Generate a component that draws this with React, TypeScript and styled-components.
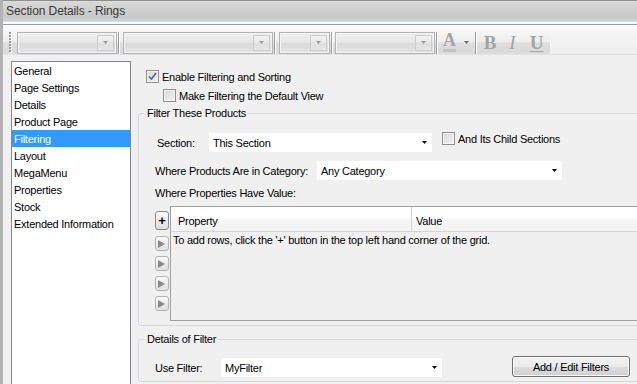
import React from "react";
import styled, { createGlobalStyle } from "styled-components";

const Global = createGlobalStyle`
  html, body { margin: 0; padding: 0; background: #f0f0f0; }
  body { font-family: "Liberation Sans", Arial, sans-serif; }
`;

const Window = styled.div`
  width: 637px;
  height: 384px;
  overflow: hidden;
  box-sizing: border-box;
  border-left: 3px solid #b2b2b2;
  background: #f0f0f0;
  display: flex;
  flex-direction: column;
  font-family: "Liberation Sans", Arial, sans-serif;
  font-size: 11px;
  letter-spacing: -0.25px;
  color: #000;
`;

const TitleBar = styled.div`
  height: 20px;
  flex-shrink: 0;
  border-top: 1px solid #8e8e8e;
  background: linear-gradient(#dadada, #cdcdcd 55%, #c9c9c9 80%, #d3d3d3);
  padding-left: 3px;
  font-size: 12px;
  letter-spacing: -0.1px;
  line-height: 21px;
  color: #3a3a3a;
`;

const TitleRule = styled.div`
  height: 2px;
  flex-shrink: 0;
  border-top: 1px solid #cde2f1;
  border-bottom: 1px solid #9c9c9c;
  background: #fbfbfb;
`;

const Toolbar = styled.div`
  height: 30px;
  flex-shrink: 0;
  box-sizing: border-box;
  padding-top: 5px;
  background: linear-gradient(#fafafa, #f3f3f3 50%, #eeeeee);
  border-bottom: 1px solid #e2e2e2;
`;

const Strip = styled.div`
  width: 547px;
  height: 25px;
  display: flex;
  align-items: center;
  padding-left: 6px;
  box-sizing: border-box;
  background: linear-gradient(#f7f7f7, #eeeeee 46%, #dedede 52%, #dadada 90%, #e4e4e4);
  border-radius: 0 3px 3px 0;
`;

const Grip = styled.svg`
  flex-shrink: 0;
`;

const ToolCombo = styled.div<{ $w: number; $ml: number }>`
  width: ${(p) => p.$w}px;
  margin-left: ${(p) => p.$ml}px;
  height: 22px;
  flex-shrink: 0;
  box-sizing: border-box;
  border: 1px solid #b4b4b4;
  box-shadow: inset 0 0 0 1px #f3f3f3;
  background: linear-gradient(#efefef, #e7e7e7 45%, #dadada 55%, #e5e5e5);
  display: flex;
  justify-content: flex-end;
  padding: 2px;
`;

const ToolArrow = styled.div`
  width: 17px;
  height: 100%;
  box-sizing: border-box;
  border: 1px solid #cdcdcd;
  background: linear-gradient(#f1f1f1, #e9e9e9 45%, #dedede 55%, #e8e8e8);
  display: flex;
  align-items: center;
  justify-content: center;
`;

const ToolSep = styled.div<{ $ml: number }>`
  width: 1px;
  height: 22px;
  margin-left: ${(p) => p.$ml}px;
  flex-shrink: 0;
  background: #9d9d9d;
  border-right: 1px solid #ffffff;
`;

const ToolGlyph = styled.span<{ $ml: number; $w: number; $italic?: boolean; $under?: boolean }>`
  margin-left: ${(p) => p.$ml}px;
  width: ${(p) => p.$w}px;
  flex-shrink: 0;
  display: inline-flex;
  justify-content: center;
  font-family: "Liberation Serif", "Times New Roman", serif;
  font-size: 19px;
  font-weight: ${(p) => (p.$italic ? "normal" : "bold")};
  font-style: ${(p) => (p.$italic ? "italic" : "normal")};
  text-decoration: ${(p) => (p.$under ? "underline" : "none")};
  text-underline-offset: 2px;
  color: #a3a3a3;
  line-height: 20px;
  letter-spacing: 0;
`;

const ColorA = styled.span`
  margin-left: 5px;
  width: 13px;
  flex-shrink: 0;
  display: inline-flex;
  flex-direction: column;
  align-items: center;
  font-family: "Liberation Serif", "Times New Roman", serif;
  font-size: 18px;
  font-weight: bold;
  color: #a5a5a5;
  line-height: 15px;
  letter-spacing: 0;
`;

const ColorBar = styled.span`
  width: 13px;
  height: 3px;
  margin-top: 1px;
  background: #c3c3c3;
`;

const SmallArrow = styled.svg<{ $ml?: number }>`
  margin-left: ${(p) => p.$ml ?? 0}px;
  flex-shrink: 0;
`;

const Body = styled.div`
  flex: 1;
  min-height: 0;
  display: flex;
  overflow: hidden;
`;

const NavList = styled.ul`
  list-style: none;
  margin: 6px 0 0 8px;
  padding: 0;
  width: 120px;
  height: 340px;
  flex-shrink: 0;
  box-sizing: border-box;
  border: 1px solid #828790;
  background: #ffffff;
`;

const NavItem = styled.li<{ $sel?: boolean }>`
  height: 17px;
  line-height: 18px;
  padding-left: 2px;
  background: ${(p) => (p.$sel ? "#3399ff" : "transparent")};
  color: ${(p) => (p.$sel ? "#ffffff" : "#000000")};
  white-space: nowrap;
`;

const Main = styled.div`
  flex: 1;
  min-width: 0;
  padding-top: 13px;
  display: flex;
  flex-direction: column;
  overflow: hidden;
`;

const CheckRow = styled.label<{ $ml: number; $mt?: number }>`
  display: flex;
  align-items: center;
  gap: 3px;
  height: 17px;
  margin-left: ${(p) => p.$ml}px;
  margin-top: ${(p) => p.$mt ?? 0}px;
  white-space: nowrap;
`;

const Box = styled.span`
  width: 13px;
  height: 13px;
  flex-shrink: 0;
  box-sizing: border-box;
  border: 1px solid #8f8f8f;
  box-shadow: inset 0 0 0 1px #f4f4f4;
  background: linear-gradient(135deg, #d4d6d9, #f4f4f4);
  display: flex;
  align-items: center;
  justify-content: center;
`;

const Group = styled.fieldset<{ $mt: number }>`
  margin: ${(p) => p.$mt}px 0 0 7px;
  width: 520px;
  min-width: 0;
  flex-shrink: 0;
  box-sizing: border-box;
  border: 1px solid #d5d9dd;
  border-radius: 3px;
  padding: 0 0 4px 6px;
`;

const Legend = styled.legend`
  padding: 0 2px;
  line-height: 14px;
  font-size: 11px;
`;

const GroupInner = styled.div`
  padding-left: 10px;
  display: flex;
  flex-direction: column;
`;

const FieldRow = styled.div<{ $mt: number }>`
  display: flex;
  align-items: center;
  height: 19px;
  margin-top: ${(p) => p.$mt}px;
  white-space: nowrap;
`;

const FieldLabel = styled.span<{ $w: number; $pl?: number }>`
  width: ${(p) => p.$w}px;
  padding-left: ${(p) => p.$pl ?? 0}px;
  box-sizing: border-box;
  flex-shrink: 0;
`;

const Combo = styled.div<{ $w: number }>`
  width: ${(p) => p.$w}px;
  height: 19px;
  flex-shrink: 0;
  box-sizing: border-box;
  background: #ffffff;
  display: flex;
  align-items: center;
  justify-content: space-between;
  padding: 0 5px 0 4px;
`;

const SideCheck = styled.label`
  display: flex;
  align-items: center;
  gap: 3px;
  margin-left: 10px;
  align-self: flex-start;
  margin-top: -1px;
  height: 13px;
`;

const PlainLabel = styled.div<{ $mt: number }>`
  margin-top: ${(p) => p.$mt}px;
  line-height: 14px;
`;

const GridBlock = styled.div`
  display: flex;
  margin-top: 6px;
`;

const RowHeads = styled.div`
  width: 14px;
  flex-shrink: 0;
  display: flex;
  flex-direction: column;
  padding-top: 5px;
`;

const PlusBtn = styled.div`
  height: 19px;
  box-sizing: border-box;
  border: 1px solid #8b8b8b;
  border-radius: 3px;
  background: linear-gradient(#fbfbfb, #ececec 50%, #dedede);
  display: flex;
  align-items: center;
  justify-content: center;
  font-weight: bold;
  font-size: 13px;
  line-height: 13px;
  letter-spacing: 0;
`;

const RowBtn = styled.div<{ $mt: number }>`
  height: 15px;
  margin-top: ${(p) => p.$mt}px;
  box-sizing: border-box;
  border: 1px solid #b5b5b5;
  border-radius: 3px;
  background: linear-gradient(#fbfbfb, #ececec 50%, #e2e2e2);
  display: flex;
  align-items: center;
  padding-left: 2px;
`;

const Grid = styled.div`
  flex: 1;
  margin-left: 1px;
  height: 115px;
  box-sizing: border-box;
  border-top: 1px solid #a0a0a0;
  border-left: 1px solid #a0a0a0;
  border-bottom: 1px solid #a0a0a0;
  background: #f0f0f0;
  overflow: hidden;
`;

const GridHead = styled.div`
  display: flex;
  height: 24px;
  border-bottom: 1px solid #d5d5d5;
  background: linear-gradient(#ffffff, #ffffff 45%, #f7f7f7 50%, #f2f2f2);
`;

const HeadCell = styled.div<{ $w?: number; $pl: number }>`
  width: ${(p) => (p.$w ? `${p.$w}px` : "auto")};
  flex: ${(p) => (p.$w ? "0 0 auto" : "1")};
  box-sizing: border-box;
  padding: 4px 0 0 ${(p) => p.$pl}px;
  border-right: ${(p) => (p.$w ? "1px solid #d5d5d5" : "none")};
  display: flex;
  align-items: center;
`;

const GridText = styled.div`
  padding: 1px 2px;
  line-height: 14px;
  white-space: nowrap;
`;

const Button = styled.button`
  margin-left: 70px;
  align-self: flex-start;
  margin-top: -2px;
  width: 118px;
  height: 21px;
  box-sizing: border-box;
  border: 1px solid #707070;
  border-radius: 3px;
  box-shadow: inset 0 0 0 1px #fbfbfb;
  background: linear-gradient(#f2f2f2, #ebebeb 50%, #dddddd 52%, #cfcfcf);
  font-family: "Liberation Sans", Arial, sans-serif;
  font-size: 11px;
  letter-spacing: -0.25px;
  color: #000;
  padding: 0;
`;

const Arrow = ({ color = "#000" }: { color?: string }) => (
  <svg width="5" height="3" viewBox="0 0 5 3">
    <path d="M0 0H5L2.5 3Z" fill={color} />
  </svg>
);

const Check = () => (
  <svg width="9" height="9" viewBox="0 0 9 9">
    <path d="M1 4.5L3.5 7L8 1" stroke="#4a61a0" strokeWidth="1.6" fill="none" />
  </svg>
);

const Tri = () => (
  <svg width="7" height="8" viewBox="0 0 7 8">
    <path d="M0 0L7 4L0 8Z" fill="#8a8a8a" />
  </svg>
);

const navItems = [
  "General",
  "Page Settings",
  "Details",
  "Product Page",
  "Filtering",
  "Layout",
  "MegaMenu",
  "Properties",
  "Stock",
  "Extended Information",
];

export default function App() {
  return (
    <>
      <Global />
      <Window>
        <TitleBar>Section Details - Rings</TitleBar>
        <TitleRule />
        <Toolbar>
          <Strip>
            <Grip width="4" height="22" viewBox="0 0 4 22">
              {[1, 4, 7, 10, 13, 16, 19].map((y) => (
                <g key={y}>
                  <rect x="1" y={y} width="2" height="2" fill="#ffffff" />
                  <rect x="0" y={y - 1} width="2" height="2" fill="#9a9a9a" />
                </g>
              ))}
            </Grip>
            <ToolCombo $w={100} $ml={4}>
              <ToolArrow>
                <Arrow color="#9c9c9c" />
              </ToolArrow>
            </ToolCombo>
            <ToolSep $ml={1} />
            <ToolCombo $w={150} $ml={3}>
              <ToolArrow>
                <Arrow color="#9c9c9c" />
              </ToolArrow>
            </ToolCombo>
            <ToolSep $ml={1} />
            <ToolCombo $w={51} $ml={3}>
              <ToolArrow>
                <Arrow color="#9c9c9c" />
              </ToolArrow>
            </ToolCombo>
            <ToolSep $ml={1} />
            <ToolCombo $w={100} $ml={2}>
              <ToolArrow>
                <Arrow color="#9c9c9c" />
              </ToolArrow>
            </ToolCombo>
            <ToolSep $ml={1} />
            <ColorA>
              A
              <ColorBar />
            </ColorA>
            <SmallArrow $ml={8} width="5" height="3" viewBox="0 0 5 3">
              <path d="M0 0H5L2.5 3Z" fill="#6e6e6e" />
            </SmallArrow>
            <ToolSep $ml={6} />
            <ToolGlyph $ml={6} $w={14}>B</ToolGlyph>
            <ToolGlyph $ml={11} $w={9} $italic>I</ToolGlyph>
            <ToolGlyph $ml={12} $w={15} $under>U</ToolGlyph>
          </Strip>
        </Toolbar>
        <Body>
          <NavList>
            {navItems.map((n) => (
              <NavItem key={n} $sel={n === "Filtering"}>
                {n}
              </NavItem>
            ))}
          </NavList>
          <Main>
            <CheckRow $ml={15}>
              <Box>
                <Check />
              </Box>
              Enable Filtering and Sorting
            </CheckRow>
            <CheckRow $ml={32} $mt={2}>
              <Box />
              Make Filtering the Default View
            </CheckRow>
            <Group $mt={2}>
              <Legend>Filter These Products</Legend>
              <GroupInner>
                <FieldRow $mt={13}>
                  <FieldLabel $w={54} $pl={2}>
                    Section:
                  </FieldLabel>
                  <Combo $w={223}>
                    This Section
                    <Arrow />
                  </Combo>
                  <SideCheck>
                    <Box />
                    And Its Child Sections
                  </SideCheck>
                </FieldRow>
                <FieldRow $mt={9}>
                  <FieldLabel $w={162}>Where Products Are in Category:</FieldLabel>
                  <Combo $w={245}>
                    Any Category
                    <Arrow />
                  </Combo>
                </FieldRow>
                <PlainLabel $mt={6}>Where Properties Have Value:</PlainLabel>
                <GridBlock>
                  <RowHeads>
                    <PlusBtn>+</PlusBtn>
                    <RowBtn $mt={6}>
                      <Tri />
                    </RowBtn>
                    <RowBtn $mt={5}>
                      <Tri />
                    </RowBtn>
                    <RowBtn $mt={5}>
                      <Tri />
                    </RowBtn>
                    <RowBtn $mt={5}>
                      <Tri />
                    </RowBtn>
                  </RowHeads>
                  <Grid>
                    <GridHead>
                      <HeadCell $w={241} $pl={7}>
                        Property
                      </HeadCell>
                      <HeadCell $pl={4}>Value</HeadCell>
                    </GridHead>
                    <GridText>
                      To add rows, click the '+' button in the top left hand corner of the grid.
                    </GridText>
                  </Grid>
                </GridBlock>
              </GroupInner>
            </Group>
            <Group $mt={6}>
              <Legend>Details of Filter</Legend>
              <GroupInner>
                <FieldRow $mt={12}>
                  <FieldLabel $w={66}>Use Filter:</FieldLabel>
                  <Combo $w={221}>
                    MyFilter
                    <Arrow />
                  </Combo>
                  <Button>Add / Edit Filters</Button>
                </FieldRow>
              </GroupInner>
            </Group>
          </Main>
        </Body>
      </Window>
    </>
  );
}
